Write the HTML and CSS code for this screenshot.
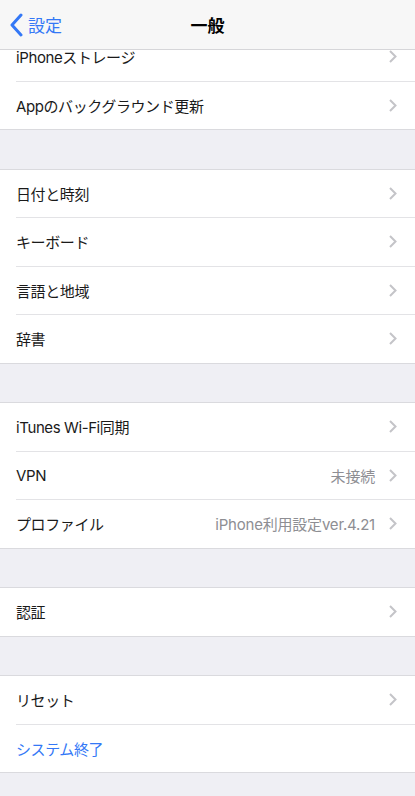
FILE: index.html
```html
<!doctype html>
<html lang="ja">

<head>
	<meta charset="utf-8">
	<meta name="viewport" content="width=device-width, initial-scale=1.0">
	<title>一般</title>
	<link rel="stylesheet" href="styles.css">
</head>

<body>
	<header class="navbar">
		<a class="back" href="#">
			<svg class="back-icon" width="14" height="24" viewBox="0 0 14 24">
				<path d="M12 2 L3 12 L12 22" fill="none" stroke="currentColor" stroke-width="3" stroke-linecap="round" stroke-linejoin="round" />
			</svg>
			<span>設定</span>
		</a>
		<h1>一般</h1>
	</header>

	<main class="list">
		<section class="group first">
			<div class="row"><span class="label">iPhoneストレージ</span><span class="chev"></span></div>
			<div class="row"><span class="label">Appのバックグラウンド更新</span><span class="chev"></span></div>
		</section>

		<section class="group">
			<div class="row"><span class="label">日付と時刻</span><span class="chev"></span></div>
			<div class="row"><span class="label">キーボード</span><span class="chev"></span></div>
			<div class="row"><span class="label">言語と地域</span><span class="chev"></span></div>
			<div class="row"><span class="label">辞書</span><span class="chev"></span></div>
		</section>

		<section class="group">
			<div class="row"><span class="label">iTunes Wi-Fi同期</span><span class="chev"></span></div>
			<div class="row"><span class="label">VPN</span><span class="value">未接続</span><span class="chev"></span></div>
			<div class="row"><span class="label">プロファイル</span><span class="value">iPhone利用設定ver.4.21</span><span class="chev"></span></div>
		</section>

		<section class="group">
			<div class="row"><span class="label">認証</span><span class="chev"></span></div>
		</section>

		<section class="group">
			<div class="row"><span class="label">リセット</span><span class="chev"></span></div>
			<div class="row"><span class="label action">システム終了</span></div>
		</section>
	</main>
</body>

</html>
```

FILE: styles.css
```css
html {
	box-sizing: border-box;
	font-family: Inter, "Noto Sans CJK JP", sans-serif;
	font-size: 15px;
}

*,
*:before,
*:after {
	box-sizing: inherit;
}

body,
h1 {
	margin: 0;
	padding: 0;
}

body {
	background-color: #efeff4;
	color: #1a1a1a;
	height: 796px;
	overflow: hidden;
}

.navbar {
	position: relative;
	z-index: 1;
	display: flex;
	align-items: center;
	justify-content: center;
	height: 50px;
	background-color: #f7f7f7;
	border-bottom: 1px solid #d6d6d9;
}

.navbar h1 {
	font-size: 17px;
	font-weight: bold;
	color: #000;
}

.back {
	position: absolute;
	left: 9px;
	top: 12px;
	display: flex;
	align-items: center;
	gap: 5px;
	color: #3478f6;
	text-decoration: none;
	font-size: 17px;
}

.back-icon {
	display: block;
}

.list {
	display: flex;
	flex-direction: column;
	gap: 38.5px;
}

.group {
	background-color: #fff;
	border-top: 1px solid #dadade;
	border-bottom: 1px solid #dadade;
}

.group.first {
	margin-top: -18px;
}

.row {
	display: flex;
	align-items: center;
	height: 48.5px;
	margin-left: 16px;
	padding-right: 18px;
	border-bottom: 1px solid #e3e3e6;
}

.row:last-child {
	height: 47.5px;
	border-bottom: none;
}

.label {
	flex: 1;
	letter-spacing: -0.4px;
}

.label.action {
	color: #3478f6;
}

.value {
	color: #8e8e93;
	margin-right: 14px;
	letter-spacing: -0.2px;
}

.chev {
	width: 8px;
	height: 13px;
	background: no-repeat center / 8px 13px url("data:image/svg+xml,%3Csvg xmlns='http://www.w3.org/2000/svg' viewBox='0 0 8 13'%3E%3Cpath d='M1 1 L6.5 6.5 L1 12' fill='none' stroke='%23c4c4c8' stroke-width='2'/%3E%3C/svg%3E");
}
```
